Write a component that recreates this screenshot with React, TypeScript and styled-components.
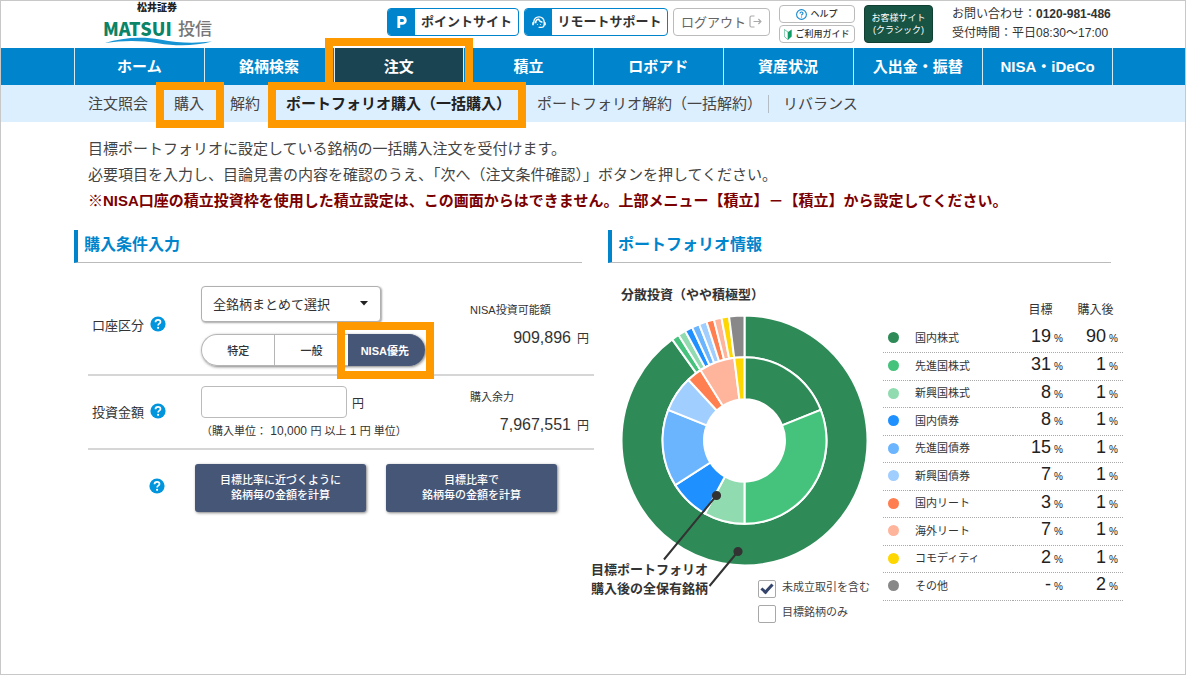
import React, { useState } from "react";
import styled, { createGlobalStyle, css } from "styled-components";

const SANS = `"Liberation Sans", "Noto Sans CJK JP", sans-serif`;
const BLUE = "#0085cc";
const ORANGE = "#ff9900";
const NAVY = "#465677";

const GlobalStyle = createGlobalStyle`
  *, *::before, *::after { box-sizing: border-box; }
  body {
    margin: 0;
    background: #fff;
    color: #333;
    font-family: ${SANS};
    font-size: 15px;
  }
  button, input, select { font-family: inherit; color: inherit; margin: 0; }
  a { color: inherit; text-decoration: none; }
`;

const Page = styled.div`
  min-height: 100vh;
  border: 1px solid #c8c8c8;
`;

/* Orange frame that marks the parts the guide talks about. */
const framed = css<{ $frame?: string }>`
  ${(p) =>
    p.$frame &&
    css`
      position: relative;
      &::after {
        content: "";
        position: absolute;
        inset: ${p.$frame};
        border: 8px solid ${ORANGE};
        pointer-events: none;
        z-index: 2;
      }
    `}
`;

/* ---------- Header ---------- */

const Header = styled.header`
  display: flex;
  justify-content: space-between;
  height: 47px;
  padding: 0 75px 0 102px;
`;

const Logo = styled.a`
  display: block;
  width: 110px;
`;

const LogoCompany = styled.span`
  display: block;
  padding-left: 34px;
  font-size: 10px;
  font-weight: 900;
  line-height: 14px;
  color: #222;
`;

const LogoName = styled.span`
  display: flex;
  align-items: center;
  justify-content: space-between;
  height: 24px;
  padding: 2px 1px 0 0;
  font-family: "Noto Sans CJK JP", sans-serif;
  font-size: 18px;
  font-weight: 900;
  line-height: 22px;
  color: #0b8468;
  white-space: nowrap;
`;

const LogoSuffix = styled.span`
  font-size: 17px;
  font-weight: 500;
  color: #777;
`;

const LogoWave = styled.svg`
  display: block;
  margin-top: -2px;
`;

const Tools = styled.div`
  display: flex;
  gap: 9px;
`;

const MainTools = styled.div`
  display: flex;
  gap: 5px;
  padding-top: 7px;
`;

const BadgeButton = styled.button<{ $width: number }>`
  display: flex;
  align-items: stretch;
  width: ${(p) => p.$width}px;
  height: 28px;
  padding: 0;
  overflow: hidden;
  border: 1px solid ${BLUE};
  border-radius: 4px;
  background: #fff;
  font-size: 13px;
  font-weight: 700;
`;

const Badge = styled.span`
  display: flex;
  align-items: center;
  justify-content: center;
  flex: 0 0 27px;
  background: ${BLUE};
`;

const BadgeLabel = styled.span`
  flex: 1;
  line-height: 25px;
  text-align: center;
  white-space: nowrap;
`;

const LogoutButton = styled.button`
  display: flex;
  align-items: center;
  justify-content: center;
  gap: 3px;
  width: 97px;
  height: 28px;
  padding: 0 0 2px;
  border: 1px solid #bbb;
  border-radius: 4px;
  background: #fff;
  font-size: 13px;
  color: #666;
  white-space: nowrap;
`;

const SmallTools = styled.div`
  display: flex;
  flex-direction: column;
  gap: 2px;
  padding-top: 4px;
`;

const SmallButton = styled.button`
  display: flex;
  align-items: center;
  justify-content: center;
  gap: 3px;
  width: 76px;
  height: 18px;
  padding: 0;
  border: 1px solid #bbb;
  border-radius: 4px;
  background: #fff;
  font-size: 9px;
  font-weight: 500;
  line-height: 14px;
  white-space: nowrap;
`;

const ClassicButton = styled.button`
  width: 69px;
  height: 38px;
  margin-top: 4px;
  padding: 0;
  border: 1px solid #123f34;
  border-radius: 4px;
  background: #185443;
  color: #fff;
  font-size: 9px;
  line-height: 12px;
  white-space: nowrap;
`;

const Contact = styled.address`
  width: 158px;
  margin-left: 10px;
  padding-top: 4px;
  font-size: 12px;
  font-style: normal;
  line-height: 19px;
  white-space: nowrap;
`;

/* ---------- Navigation ---------- */

const GlobalNav = styled.nav`
  display: flex;
  height: 37px;
  padding: 0 72px 0 73px;
  background: ${BLUE};
`;

const NavItem = styled.a<{ $active?: boolean; $frame?: string }>`
  display: flex;
  align-items: center;
  justify-content: center;
  flex: 1 1 0;
  padding-bottom: 2px;
  border-left: 1px solid #d5ebf8;
  background: ${(p) => (p.$active ? "#1b4453" : "transparent")};
  color: #fff;
  font-size: 15px;
  font-weight: 700;
  white-space: nowrap;
  &:last-child { border-right: 1px solid #d5ebf8; }
  ${framed}
`;

const SubNav = styled.nav`
  display: flex;
  gap: 26px;
  height: 37px;
  padding: 0 73px 0 87px;
  background: #dcefff;
`;

const SubItem = styled.a<{ $active?: boolean; $frame?: string }>`
  display: flex;
  align-items: center;
  padding-bottom: 2px;
  font-weight: ${(p) => (p.$active ? 700 : 400)};
  color: ${(p) => (p.$active ? "#222" : "#444")};
  white-space: nowrap;
  ${framed}
`;

const SubDivider = styled.span`
  align-self: center;
  width: 1px;
  height: 18px;
  margin: 0 -12px 0 -20px;
  background: #b4bcc4;
`;

/* ---------- Body ---------- */

const Intro = styled.section`
  padding: 14px 73px 0 87px;
  line-height: 26px;
`;

const IntroText = styled.p<{ $warning?: boolean }>`
  margin: 0;
  font-weight: ${(p) => (p.$warning ? 700 : 400)};
  color: ${(p) => (p.$warning ? "#7a0000" : "#444")};
`;

const Columns = styled.main`
  display: grid;
  grid-template-columns: minmax(0, 104fr) minmax(0, 103fr);
  gap: 14px;
  padding: 16px 62px 40px 73px;
`;

const Heading = styled.h2`
  height: 33px;
  margin: 0 12px 0 0;
  padding-left: 6px;
  border-left: 4px solid ${BLUE};
  border-bottom: 1px solid #bbb;
  color: ${BLUE};
  font-size: 16px;
  font-weight: 700;
  line-height: 29px;
`;

const Form = styled.form`
  margin: 13px 0 0 14px;
`;

const Row = styled.div`
  display: grid;
  grid-template-columns: 113px 1fr 119px;
  align-items: center;
  padding: 10px 5px 8px 0;
  border-bottom: 2px solid #d6d6d6;
`;

const RowLabel = styled.div`
  display: flex;
  align-items: center;
  gap: 6px;
  padding: 0 0 4px 4px;
  font-size: 13px;
  white-space: nowrap;
`;

const HelpButton = styled.button`
  display: block;
  width: 16px;
  height: 16px;
  padding: 0;
  border: 0;
  background: none;
`;

const Controls = styled.div<{ $gap: number }>`
  display: flex;
  flex-direction: column;
  align-items: flex-start;
  gap: ${(p) => p.$gap}px;
`;

const SelectBox = styled.div`
  position: relative;
  width: 180px;
`;

const Select = styled.select`
  display: block;
  width: 100%;
  height: 36px;
  padding: 0 24px 0 11px;
  appearance: none;
  border: 1px solid #b0b0b0;
  border-radius: 4px;
  background: #fff;
  box-shadow: 1px 1px 2px rgba(0, 0, 0, 0.35);
  font-size: 13px;
`;

const SelectArrow = styled.svg`
  position: absolute;
  top: 15px;
  right: 13px;
  pointer-events: none;
`;

const Segments = styled.div`
  display: flex;
  width: 224px;
  height: 32px;
  border-radius: 16px;
  box-shadow: 1px 1px 3px rgba(0, 0, 0, 0.5);
`;

const Segment = styled.label<{ $active?: boolean; $frame?: string }>`
  display: flex;
  align-items: center;
  justify-content: center;
  flex: 1 1 0;
  border: 1px solid ${(p) => (p.$active ? NAVY : "#b5b5b5")};
  border-right-width: 0;
  background: ${(p) => (p.$active ? NAVY : "#fff")};
  color: ${(p) => (p.$active ? "#fff" : "#333")};
  font-size: 11px;
  font-weight: ${(p) => (p.$active ? 700 : 500)};
  white-space: nowrap;
  &:first-child { border-radius: 16px 0 0 16px; }
  &:last-child { padding-right: 4px; border-radius: 0 16px 16px 0; }
  ${framed}
`;

const SegmentInput = styled.input`
  position: absolute;
  width: 1px;
  height: 1px;
  opacity: 0;
`;

const AmountLine = styled.div`
  display: flex;
  align-items: center;
  gap: 5px;
  font-size: 12px;
`;

const AmountInput = styled.input`
  width: 146px;
  height: 32px;
  padding: 0 8px;
  border: 1px solid #bbb;
  border-radius: 4px;
  font-size: 14px;
`;

const Hint = styled.p`
  margin: 0;
  font-size: 12px;
  line-height: 18px;
  white-space: nowrap;
`;

const HintText = styled.span`
  font-size: 11px;
`;

const Balance = styled.dl`
  display: flex;
  flex-direction: column;
  gap: 8px;
  margin: 0;
  padding-bottom: 2px;
`;

const BalanceName = styled.dt`
  font-size: 11px;
  line-height: 18px;
`;

const BalanceValue = styled.dd`
  margin: 0;
  font-size: 16px;
  line-height: 22px;
  text-align: right;
  white-space: nowrap;
`;

const Unit = styled.span`
  margin-left: 6px;
  font-size: 12px;
`;

const Actions = styled.div`
  display: flex;
  align-items: center;
  gap: 20px;
  padding: 14px 0 0 61px;
`;

const ActionHelp = styled.div`
  margin-right: 10px;
  padding-bottom: 5px;
`;

const ActionButton = styled.button`
  width: 171px;
  height: 48px;
  padding: 0;
  border: 0;
  border-radius: 3px;
  background: ${NAVY};
  box-shadow: 1px 1px 3px rgba(0, 0, 0, 0.5);
  color: #fff;
  font-size: 11px;
  font-weight: 500;
  line-height: 15px;
`;

/* ---------- Portfolio ---------- */

const Portfolio = styled.div`
  display: flex;
  align-items: flex-start;
  justify-content: space-between;
  margin-top: 23px;
  margin-left: -17px;
`;

const ChartPanel = styled.div`
  width: 280px;
`;

const PortfolioName = styled.h3`
  margin: 0 0 8px 30px;
  font-size: 13px;
  font-weight: 700;
  line-height: 18px;
`;

const Chart = styled.svg`
  display: block;
  overflow: visible;
`;

const ChartFooter = styled.div`
  display: grid;
  grid-template-columns: 167px 1fr;
  margin-top: -5px;
`;

const RingNames = styled.p`
  margin: 0;
  font-size: 13px;
  font-weight: 700;
  line-height: 19px;
  white-space: nowrap;
`;

const Checks = styled.div`
  display: flex;
  flex-direction: column;
  gap: 7px;
  padding-top: 20px;
`;

const CheckLabel = styled.label`
  display: flex;
  gap: 6px;
  height: 18px;
  color: #444;
  font-size: 11px;
  line-height: 14px;
  white-space: nowrap;
`;

const CheckBox = styled.input`
  flex: none;
  width: 18px;
  height: 18px;
  appearance: none;
  border: 1px solid #a8a8a8;
  border-radius: 2px;
  background: #fff;
  &:checked::after {
    content: "";
    display: block;
    width: 12px;
    height: 7px;
    margin: 3px 0 0 2px;
    border: solid #34446b;
    border-width: 0 0 3px 3px;
    transform: rotate(-48deg);
  }
`;

const Legend = styled.table`
  width: 240px;
  margin-top: 14px;
  border-collapse: collapse;
  table-layout: fixed;
  tbody tr { height: 27px; }
  tbody tr:nth-child(even) { height: 28px; }
`;

const LegendHead = styled.th<{ $width: number }>`
  width: ${(p) => p.$width}px;
  height: 25px;
  padding: 0 0 5px;
  font-size: 12px;
  font-weight: 400;
  line-height: 20px;
  white-space: nowrap;
`;

const Cell = styled.td<{ $numeric?: boolean }>`
  padding: 0 5px 1px;
  border-bottom: 1px dotted #aaa;
  color: ${(p) => (p.$numeric ? "#222" : "#333")};
  font-size: ${(p) => (p.$numeric ? 18 : 11)}px;
  line-height: 20px;
  text-align: ${(p) => (p.$numeric ? "right" : "left")};
  white-space: nowrap;
`;

const Percent = styled.span`
  margin-left: 3px;
  font-size: 10px;
`;

const Dot = styled.span<{ $color: string }>`
  display: block;
  width: 11px;
  height: 11px;
  border-radius: 50%;
  background: ${(p) => p.$color};
`;

/* ---------- Data ---------- */

const NAV = ["ホーム", "銘柄検索", "注文", "積立", "ロボアド", "資産状況", "入出金・振替", "NISA・iDeCo"];

const ASSETS = [
  { name: "国内株式", color: "#2e8b57", target: 19, after: 90 },
  { name: "先進国株式", color: "#45c27b", target: 31, after: 1 },
  { name: "新興国株式", color: "#90dbb0", target: 8, after: 1 },
  { name: "国内債券", color: "#1e90ff", target: 8, after: 1 },
  { name: "先進国債券", color: "#6bb5ff", target: 15, after: 1 },
  { name: "新興国債券", color: "#9fceff", target: 7, after: 1 },
  { name: "国内リート", color: "#ff7f50", target: 3, after: 1 },
  { name: "海外リート", color: "#ffb59c", target: 7, after: 1 },
  { name: "コモディティ", color: "#ffd700", target: 2, after: 1 },
  { name: "その他", color: "#888888", target: 0, after: 2 },
];

const CENTER_X = 153.5;
const CENTER_Y = 128.5;
const STRETCH = 1.016;

function point(radius: number, share: number) {
  const angle = share * 2 * Math.PI;
  const x = CENTER_X + radius * Math.sin(angle);
  const y = CENTER_Y - radius * STRETCH * Math.cos(angle);
  return `${x.toFixed(2)} ${y.toFixed(2)}`;
}

function Ring({ values, inner, outer }: { values: number[]; inner: number; outer: number }) {
  const total = values.reduce((a, b) => a + b, 0);
  let start = 0;
  return (
    <g stroke="#fff" strokeWidth="2">
      {values.map((value, i) => {
        if (!value) return null;
        const from = start / total;
        start += value;
        const to = start / total;
        const large = to - from > 0.5 ? 1 : 0;
        const d =
          `M${point(outer, from)} A${outer} ${outer * STRETCH} 0 ${large} 1 ${point(outer, to)} ` +
          `L${point(inner, to)} A${inner} ${inner * STRETCH} 0 ${large} 0 ${point(inner, from)} Z`;
        return <path key={i} d={d} fill={ASSETS[i].color} />;
      })}
    </g>
  );
}

function Help({ topic }: { topic: string }) {
  return (
    <HelpButton type="button" aria-label={`${topic}のヘルプ`}>
      <svg width="16" height="16" viewBox="0 0 16 16" fill="none">
        <circle cx="8" cy="8" r="7.6" fill="#0095dd" />
        <path d="M5.5 6.3C5.5 4.8 6.5 3.9 8 3.9s2.5.9 2.5 2.1c0 1.6-2.4 1.7-2.4 3.4" stroke="#fff" strokeWidth="1.7" />
        <circle cx="8.1" cy="11.8" r="1.1" fill="#fff" />
      </svg>
    </HelpButton>
  );
}

export default function App() {
  const [account, setAccount] = useState("NISA優先");
  const [pending, setPending] = useState(true);
  const [targetOnly, setTargetOnly] = useState(false);

  return (
    <Page>
      <GlobalStyle />
      <Header>
        <Logo href="#">
          <LogoCompany>松井証券</LogoCompany>
          <LogoName>
            MATSUI <LogoSuffix>投信</LogoSuffix>
          </LogoName>
          <LogoWave width="110" height="9" viewBox="0 0 110 9">
            <path d="M2 6C18 1 38-1 57 2.500C76 6.200 92 6.400 109 4.500C92 9 74 9.400 55 6.200C38 3.200 20 3.200 2 6Z" fill="#1593d3" />
          </LogoWave>
        </Logo>
        <Tools>
          <MainTools>
            <BadgeButton type="button" $width={132}>
              <Badge>
                <svg width="14" height="14" viewBox="0 0 14 14" fill="none">
                  <path d="M3.800 13V2.500H7.400a2.900 2.900 0 0 1 0 5.900H3.800" stroke="#fff" strokeWidth="2.800" />
                </svg>
              </Badge>
              <BadgeLabel>ポイントサイト</BadgeLabel>
            </BadgeButton>
            <BadgeButton type="button" $width={144}>
              <Badge>
                <svg width="14" height="14" viewBox="0 0 14 14" fill="none" stroke="#fff" strokeWidth="1.300">
                  <path d="M1.800 8.500V7a5.200 5.200 0 0 1 10.400 0v2.200c0 1.900-1.300 3.200-3.200 3.200H6.600" />
                  <path d="M1 7.300v3M13 7.300v3" strokeWidth="1.600" />
                  <path d="M3.600 8.200C3.600 5.800 5 4.300 6.600 4.300C7.300 6 8.600 7 10.400 7.300" strokeWidth="1.600" />
                  <circle cx="5.400" cy="9.400" r=".5" fill="#fff" stroke="none" />
                  <circle cx="8.600" cy="9.400" r=".5" fill="#fff" stroke="none" />
                </svg>
              </Badge>
              <BadgeLabel>リモートサポート</BadgeLabel>
            </BadgeButton>
            <LogoutButton type="button">
              ログアウト
              <svg width="13" height="13" viewBox="0 0 13 13" fill="none" stroke="#aaa" strokeWidth="1.200">
                <path d="M5.500 1H2.500A1.500 1.500 0 0 0 1 2.500v8A1.500 1.500 0 0 0 2.500 12h3M4.500 6.500h7.300M9.400 4l2.500 2.500L9.400 9" />
              </svg>
            </LogoutButton>
          </MainTools>
          <SmallTools>
            <SmallButton type="button">
              <svg width="11" height="11" viewBox="0 0 11 11" fill="none" stroke="#1689cf">
                <circle cx="5.500" cy="5.500" r="4.900" strokeWidth="1.100" />
                <path d="M4 4.400C4 3.500 4.600 3 5.500 3s1.500.5 1.500 1.300c0 1-1.500 1-1.500 2.200M5.500 7.500v1" strokeWidth="1.100" />
              </svg>
              ヘルプ
            </SmallButton>
            <SmallButton type="button">
              <svg width="8" height="11" viewBox="0 0 8 11">
                <path d="M.3.500L4 3V10.700L.3 7.500Z" fill="#fff" stroke="#19a06c" strokeWidth=".6" />
                <path d="M4 3L7.700.500V7.500L4 10.700Z" fill="#0d9c66" />
              </svg>
              ご利用ガイド
            </SmallButton>
          </SmallTools>
          <ClassicButton type="button">
            お客様サイト
            <br />
            (クラシック)
          </ClassicButton>
          <Contact>
            お問い合わせ：<b>0120-981-486</b>
            <br />
            受付時間：平日08:30～17:00
          </Contact>
        </Tools>
      </Header>

      <GlobalNav>
        {NAV.map((name) => (
          <NavItem
            key={name}
            href="#"
            $active={name === "注文"}
            $frame={name === "注文" ? "-10px -10px -5px -10px" : undefined}
          >
            {name}
          </NavItem>
        ))}
      </GlobalNav>
      <SubNav>
        <SubItem href="#">注文照会</SubItem>
        <SubItem href="#" $frame="-3px -20px -6px -18px">購入</SubItem>
        <SubItem href="#">解約</SubItem>
        <SubItem href="#" $active $frame="-3px -15px -6px -18px">ポートフォリオ購入（一括購入）</SubItem>
        <SubItem href="#">ポートフォリオ解約（一括解約）</SubItem>
        <SubDivider />
        <SubItem href="#">リバランス</SubItem>
      </SubNav>

      <Intro>
        <IntroText>目標ポートフォリオに設定している銘柄の一括購入注文を受付けます。</IntroText>
        <IntroText>必要項目を入力し、目論見書の内容を確認のうえ、「次へ（注文条件確認）」ボタンを押してください。</IntroText>
        <IntroText $warning>
          ※NISA口座の積立投資枠を使用した積立設定は、この画面からはできません。上部メニュー【積立】－【積立】から設定してください。
        </IntroText>
      </Intro>

      <Columns>
        <section>
          <Heading>購入条件入力</Heading>
          <Form onSubmit={(e) => e.preventDefault()}>
            <Row>
              <RowLabel>
                <label htmlFor="account">口座区分</label>
                <Help topic="口座区分" />
              </RowLabel>
              <Controls $gap={12}>
                <SelectBox>
                  <Select id="account">
                    <option>全銘柄まとめて選択</option>
                  </Select>
                  <SelectArrow width="8" height="5" viewBox="0 0 8 5">
                    <path d="M0 0H8L4 4.500Z" fill="#222" />
                  </SelectArrow>
                </SelectBox>
                <Segments>
                  {["特定", "一般", "NISA優先"].map((name) => (
                    <Segment
                      key={name}
                      $active={account === name}
                      $frame={name === "NISA優先" ? "-13px -9px -14px -12px" : undefined}
                    >
                      <SegmentInput
                        type="radio"
                        name="accountType"
                        checked={account === name}
                        onChange={() => setAccount(name)}
                      />
                      {name}
                    </Segment>
                  ))}
                </Segments>
              </Controls>
              <Balance>
                <BalanceName>NISA投資可能額</BalanceName>
                <BalanceValue>
                  909,896<Unit>円</Unit>
                </BalanceValue>
              </Balance>
            </Row>
            <Row>
              <RowLabel>
                <label htmlFor="amount">投資金額</label>
                <Help topic="投資金額" />
              </RowLabel>
              <Controls $gap={4}>
                <AmountLine>
                  <AmountInput id="amount" type="text" />円
                </AmountLine>
                <Hint>
                  <HintText>（購入単位：</HintText> 10,000 <HintText>円 以上</HintText> 1 <HintText>円 単位）</HintText>
                </Hint>
              </Controls>
              <Balance>
                <BalanceName>購入余力</BalanceName>
                <BalanceValue>
                  7,967,551<Unit>円</Unit>
                </BalanceValue>
              </Balance>
            </Row>
            <Actions>
              <ActionHelp>
                <Help topic="計算方法" />
              </ActionHelp>
              <ActionButton type="button">
                目標比率に近づくように
                <br />
                銘柄毎の金額を計算
              </ActionButton>
              <ActionButton type="button">
                目標比率で
                <br />
                銘柄毎の金額を計算
              </ActionButton>
            </Actions>
          </Form>
        </section>

        <section>
          <Heading>ポートフォリオ情報</Heading>
          <Portfolio>
            <ChartPanel>
              <PortfolioName>分散投資（やや積極型）</PortfolioName>
              <Chart width="280" height="253" viewBox="0 0 280 253">
                <Ring values={ASSETS.map((a) => a.after)} inner={82} outer={123} />
                <Ring values={ASSETS.map((a) => a.target)} inner={40.5} outer={82} />
                <g stroke="#333" strokeWidth="2" fill="#333">
                  <path d="M125.500 183.500L73 247.500M147 239.500L118.500 274" />
                  <circle cx="125.500" cy="183.500" r="3.600" />
                  <circle cx="147" cy="239.500" r="3.600" />
                </g>
              </Chart>
              <ChartFooter>
                <RingNames>
                  目標ポートフォリオ
                  <br />
                  購入後の全保有銘柄
                </RingNames>
                <Checks>
                  <CheckLabel>
                    <CheckBox type="checkbox" checked={pending} onChange={() => setPending(!pending)} />
                    未成立取引を含む
                  </CheckLabel>
                  <CheckLabel>
                    <CheckBox type="checkbox" checked={targetOnly} onChange={() => setTargetOnly(!targetOnly)} />
                    目標銘柄のみ
                  </CheckLabel>
                </Checks>
              </ChartFooter>
            </ChartPanel>
            <Legend>
              <thead>
                <tr>
                  <LegendHead $width={27} />
                  <LegendHead $width={103} />
                  <LegendHead $width={55}>目標</LegendHead>
                  <LegendHead $width={55}>購入後</LegendHead>
                </tr>
              </thead>
              <tbody>
                {ASSETS.map((asset) => (
                  <tr key={asset.name}>
                    <Cell>
                      <Dot $color={asset.color} />
                    </Cell>
                    <Cell>{asset.name}</Cell>
                    <Cell $numeric>
                      {asset.target || "-"}
                      <Percent>%</Percent>
                    </Cell>
                    <Cell $numeric>
                      {asset.after}
                      <Percent>%</Percent>
                    </Cell>
                  </tr>
                ))}
              </tbody>
            </Legend>
          </Portfolio>
        </section>
      </Columns>
    </Page>
  );
}
